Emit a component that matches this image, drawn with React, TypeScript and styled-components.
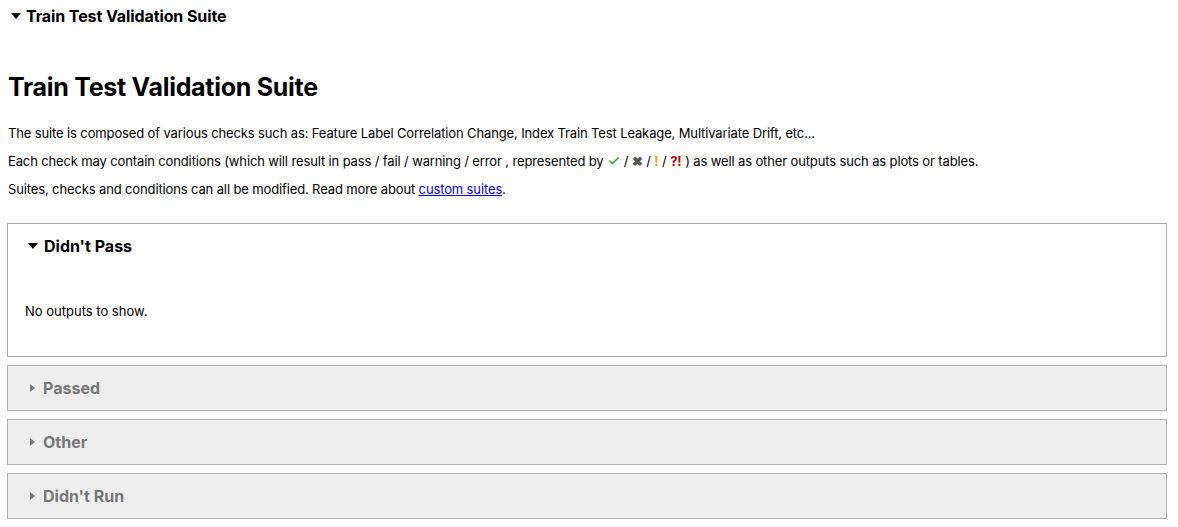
import styled, { createGlobalStyle } from 'styled-components';

const GlobalStyle = createGlobalStyle`
  body {
    margin: 0;
    background: #fff;
    font-family: Inter, "Noto Sans", sans-serif;
    color: #000;
  }
`;

const Page = styled.div`
  padding: 0 11px 0 7px;
`;

const Top = styled.div`
  display: flex;
  align-items: center;
  gap: 5px;
  height: 32px;
  padding-left: 4px;
  font-size: 16px;
  font-weight: 700;
  letter-spacing: -0.1px;
`;

const Caret = styled.span<{ $open?: boolean }>`
  display: inline-block;
  width: 0;
  height: 0;
  ${(p) =>
    p.$open
      ? `border-left: 5px solid transparent;
         border-right: 5px solid transparent;
         border-top: 6px solid #000;`
      : `border-top: 4.5px solid transparent;
         border-bottom: 4.5px solid transparent;
         border-left: 5px solid #777;
         margin-left: 2px;
         margin-right: 2px;`}
`;

const Title = styled.h1`
  margin: 38px 0 0 1px;
  font-size: 25px;
  line-height: 34px;
  font-weight: 700;
  letter-spacing: -0.28px;
`;

const Intro = styled.div`
  margin-top: 15px;
  padding-left: 1px;
  font-size: 13px;
  line-height: 28px;
  letter-spacing: -0.13px;
`;

const Mark = styled.span<{ $c: string; $bold?: boolean }>`
  color: ${(p) => p.$c};
  font-weight: ${(p) => (p.$bold ? 700 : 400)};
  font-size: ${(p) => (p.$bold ? '13px' : '15px')};
`;

const Link = styled.a`
  color: #0000ee;
  text-decoration: underline;
`;

const Section = styled.div<{ $open?: boolean }>`
  margin-top: ${(p) => (p.$open ? '20px' : '8px')};
  border: 1px solid ${(p) => (p.$open ? '#aaa' : '#b0b0b0')};
  background: ${(p) => (p.$open ? '#fff' : '#eee')};
  height: ${(p) => (p.$open ? '134px' : '46px')};
  box-sizing: border-box;
  padding: 0 17px;
`;

const Summary = styled.div<{ $muted?: boolean }>`
  display: flex;
  align-items: center;
  gap: 6px;
  height: 44px;
  padding-left: 3px;
  font-size: 16px;
  font-weight: 700;
  color: ${(p) => (p.$muted ? '#777' : '#000')};
`;

const Empty = styled.p`
  margin: 35px 0 0;
  font-size: 13px;
`;

const closed = ['Passed', 'Other', "Didn't Run"];

export default function App() {
  return (
    <Page>
      <GlobalStyle />
      <Top>
        <Caret $open />
        Train Test Validation Suite
      </Top>
      <Title>Train Test Validation Suite</Title>
      <Intro>
        <div>
          The suite is composed of various checks such as: Feature Label Correlation Change, Index Train
          Test Leakage, Multivariate Drift, etc...
        </div>
        <div>
          Each check may contain conditions (which will result in pass / fail / warning / error ,
          represented by <Mark $c="#1a9c1a">✓</Mark> / <Mark $c="#555" $bold>✖</Mark> /{' '}
          <Mark $c="#f0a000" $bold>!</Mark> / <Mark $c="#c00000" $bold>?!</Mark> ) as well as other
          outputs such as plots or tables.
        </div>
        <div>
          Suites, checks and conditions can all be modified. Read more about{' '}
          <Link href="#">custom suites</Link>.
        </div>
      </Intro>
      <Section $open>
        <Summary>
          <Caret $open />
          Didn't Pass
        </Summary>
        <Empty>No outputs to show.</Empty>
      </Section>
      {closed.map((name) => (
        <Section key={name}>
          <Summary $muted>
            <Caret />
            {name}
          </Summary>
        </Section>
      ))}
    </Page>
  );
}
